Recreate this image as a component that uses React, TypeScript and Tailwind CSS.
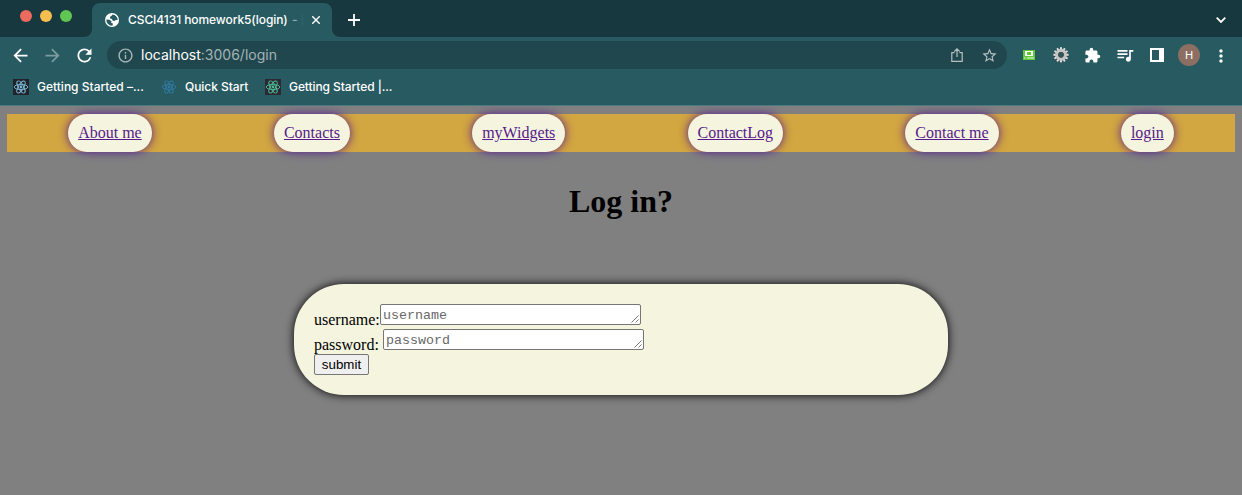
import type { ReactNode } from "react";
import {
  MdArrowBack,
  MdArrowForward,
  MdExtension,
  MdInfoOutline,
  MdMoreVert,
  MdQueueMusic,
  MdRefresh,
  MdStarBorder,
} from "react-icons/md";

const LINKS = ["About me", "Contacts", "myWidgets", "ContactLog", "Contact me", "login"];

function Slot({ children }: { children: ReactNode }) {
  return <div className="flex h-8 w-8 shrink-0 items-center justify-center pr-px">{children}</div>;
}

function Globe() {
  return (
    <svg width="14" height="14" viewBox="0 0 14 14" className="shrink-0">
      <circle cx="7" cy="7" r="7" fill="#fff" />
      <path
        d="M7.4 1.4 7 2.6 5.3 3.6 5 5.6 6.8 6 7.6 7.5 9.4 8.1 10.8 7.1 12.7 7A5.7 5.7 0 0 0 7.4 1.4ZM1.3 6.6 4.6 6.7 6.6 8.4 6.1 10.1 8 10.6 7.4 12.7A5.7 5.7 0 0 1 1.3 6.6Z"
        fill="#285a61"
      />
    </svg>
  );
}

function Atom({ color, bg }: { color: string; bg: string }) {
  return (
    <svg width="16" height="16" viewBox="0 0 16 16" fill="none" stroke={color} strokeWidth="0.95" className="shrink-0">
      <rect width="16" height="16" fill={bg} stroke="none" />
      <ellipse cx="8" cy="8" rx="6.8" ry="2.6" />
      <ellipse cx="8" cy="8" rx="6.8" ry="2.6" transform="rotate(60 8 8)" />
      <ellipse cx="8" cy="8" rx="6.8" ry="2.6" transform="rotate(120 8 8)" />
      <circle cx="8" cy="8" r="1.4" fill={color} stroke="none" />
    </svg>
  );
}

function Gear() {
  const teeth = Array.from({ length: 12 }, (_, i) => i * 30);
  return (
    <svg width="16" height="16" viewBox="0 0 16 16">
      <g fill="#2f3b3d">
        {teeth.map((a) => (
          <rect key={a} x="7" y="1.2" width="2" height="4" transform={`rotate(${a} 8 8.6)`} />
        ))}
      </g>
      <g fill="#e0e0e0">
        {teeth.map((a) => (
          <rect key={a} x="7" y="0.2" width="2" height="4" transform={`rotate(${a} 8 7.8)`} />
        ))}
      </g>
      <circle cx="8" cy="7.8" r="4.4" fill="none" stroke="#c4c4c4" strokeWidth="3.2" />
      <circle cx="8" cy="7.8" r="2.4" fill="#285a61" stroke="#4a4a4a" strokeWidth="1" />
    </svg>
  );
}

function Field({ name }: { name: string }) {
  return (
    <span className="relative block h-[21px] w-[261px]">
      <textarea
        placeholder={name}
        rows={1}
        className="block h-[21px] w-[261px] resize-none overflow-hidden rounded-[2px] border border-[#767676] bg-white px-[2px] py-[3px] font-['Liberation_Mono',monospace] text-[13.333px] leading-[15px] placeholder:text-[#686868]"
      />
      <svg width="8" height="8" viewBox="0 0 8 8" className="absolute right-[2px] bottom-[2px]" stroke="#555" strokeWidth="0.8">
        <path d="M0.5 7.5 7.5 0.5M4.5 7.5 7.5 4.5" />
      </svg>
    </span>
  );
}

export default function App() {
  return (
    <div className="flex h-[495px] w-[1242px] flex-col overflow-hidden bg-[#808080]">
      <header className="h-[106px] shrink-0 border-b border-[#4b7b81] bg-[#285a61] font-[Inter,sans-serif] text-white">
        <div className="flex h-[37px] bg-[#17383e]">
          <div className="flex w-[92px] gap-2 pt-[10px] pl-5">
            <span className="h-3 w-3 rounded-full bg-[#ed6a5e]" />
            <span className="h-3 w-3 rounded-full bg-[#f5bf4f]" />
            <span className="h-3 w-3 rounded-full bg-[#61c554]" />
          </div>
          <div className="relative mt-[3px] flex h-[34px] w-[240px] items-center rounded-t-lg bg-[#285a61] pl-[13px]">
            <svg width="8" height="8" className="absolute bottom-0 -left-2">
              <path d="M8 0V8H0A8 8 0 0 0 8 0Z" fill="#285a61" />
            </svg>
            <svg width="8" height="8" className="absolute -right-2 bottom-0">
              <path d="M0 0V8H8A8 8 0 0 1 0 0Z" fill="#285a61" />
            </svg>
            <Globe />
            <span className="ml-[9px] flex w-[176px] shrink-0 text-xs font-medium whitespace-nowrap">
              <span className="w-[160px] tracking-[-0.08px]">CSCI4131 homework5(login)</span>
              <span className="ml-[4px] opacity-50">-</span>
              <span className="mt-[2px] ml-[4px] h-3 w-px bg-white/5" />
            </span>
            <svg width="8" height="8" viewBox="0 0 8 8" className="ml-2 shrink-0" stroke="#fff" strokeWidth="1.4">
              <path d="M0.3 0.3 7.7 7.7M7.7 0.3 0.3 7.7" />
            </svg>
          </div>
          <svg width="12" height="12" viewBox="0 0 12 12" className="mt-[14px] ml-4" stroke="#fff" strokeWidth="1.8">
            <path d="M6 0V12M0 6H12" />
          </svg>
          <svg width="10" height="6" viewBox="0 0 10 6" className="mt-[17px] mr-4 ml-auto" fill="none" stroke="#fff" strokeWidth="1.8">
            <path d="M0.7 0.7 5 5 9.3 0.7" />
          </svg>
        </div>
        <div className="flex h-9 items-center px-[5px]">
          <Slot><MdArrowBack size={21} /></Slot>
          <Slot><MdArrowForward size={21} className="text-[#7b9ba0]" /></Slot>
          <Slot><MdRefresh size={21} /></Slot>
          <div className="mx-[6px] flex h-7 w-[900px] items-center rounded-full bg-[#21474e] pr-[2px] pl-[9.5px]">
            <MdInfoOutline size={17} className="text-[#a8b7b9]" />
            <span className="ml-[7.5px] text-sm text-[#a3b3b5]">
              <span className="text-white">localhost</span>:3006/login
            </span>
            <div className="ml-auto flex">
              <Slot>
                <svg width="12" height="14" viewBox="0 0 12 14" fill="none" stroke="#b4c0c2" strokeWidth="1.2">
                  <path d="M3.5 4.6H0.8V13.4H11.2V4.6H8.5M6 9V1M3.2 3.6 6 0.9 8.8 3.6" />
                </svg>
              </Slot>
              <div className="flex h-8 w-8 items-center justify-center">
                <MdStarBorder size={17} className="text-[#b4c0c2]" />
              </div>
            </div>
          </div>
          <div className="flex h-8 w-8 items-center justify-center">
            <svg width="12" height="10" viewBox="0 0 12 10">
              <rect width="12" height="10" fill="#62c83a" />
              <rect x="2" y="1" width="8" height="5" fill="#fff" />
              <rect x="4" y="2" width="4" height="3" fill="#62c83a" />
              <path d="M1 8H2.5M4 8H11" stroke="#fff" strokeWidth="0.9" />
            </svg>
          </div>
          <div className="flex h-8 w-8 items-center justify-center"><Gear /></div>
          <Slot><MdExtension size={17} /></Slot>
          <Slot><MdQueueMusic size={20} /></Slot>
          <div className="flex h-8 w-8 items-center justify-center">
            <svg width="14" height="14" viewBox="0 0 14 14">
              <path fillRule="evenodd" d="M0 0H14V14H0ZM2 2V12H9V2Z" fill="#fff" />
            </svg>
          </div>
          <div className="flex h-8 w-8 items-center justify-center">
            <span className="flex h-[22px] w-[22px] items-center justify-center rounded-full bg-[#8d6e63] text-[11px]">H</span>
          </div>
          <div className="flex h-8 w-8 items-center justify-center pt-px"><MdMoreVert size={20} /></div>
        </div>
        <div className="flex h-7 items-center gap-2 pl-[13px] text-xs font-medium whitespace-nowrap">
          <Atom color="#7ab8d4" bg="#20232a" />
          <span className="w-[116px]">Getting Started –...</span>
          <Atom color="#3279a0" bg="none" />
          <span className="w-[72px] tracking-[-0.06px]">Quick Start</span>
          <Atom color="#4cb894" bg="#2b2a33" />
          <span className="tracking-[-0.08px]">Getting Started |...</span>
        </div>
      </header>

      <main className="flex flex-col px-[7px] pt-2 font-['Liberation_Serif',serif] text-base text-black">
        <nav className="flex h-[38px] justify-around bg-[#d2a641]">
          {LINKS.map((label) => (
            <a
              key={label}
              href="#"
              className="rounded-[20px] bg-[#f5f5df] px-[10px] leading-[38px] text-[#551a8b] underline shadow-[0_0_10px_#551a8b]"
            >
              {label}
            </a>
          ))}
        </nav>
        <h1 className="mt-[31px] text-center text-[32px] leading-[37px] font-bold">Log in?</h1>
        <form className="mt-16 ml-[287px] flex h-[111px] w-[654px] flex-col rounded-[50px] bg-[#f4f4df] px-5 pt-5 shadow-[0_0_10px_#000]">
          <div className="flex h-[25px]">
            <label className="w-[66px] pt-[7px] leading-[18px]">username:</label>
            <Field name="username" />
          </div>
          <div className="flex h-[25px]">
            <label className="w-[69px] pt-[7px] leading-[18px]">password:</label>
            <Field name="password" />
          </div>
          <button
            type="button"
            className="h-[21px] w-[55px] rounded-[2px] border border-[#767676] bg-[#efefef] font-['Liberation_Sans',sans-serif] text-[13.333px] leading-[18px]"
          >
            submit
          </button>
        </form>
      </main>
    </div>
  );
}
